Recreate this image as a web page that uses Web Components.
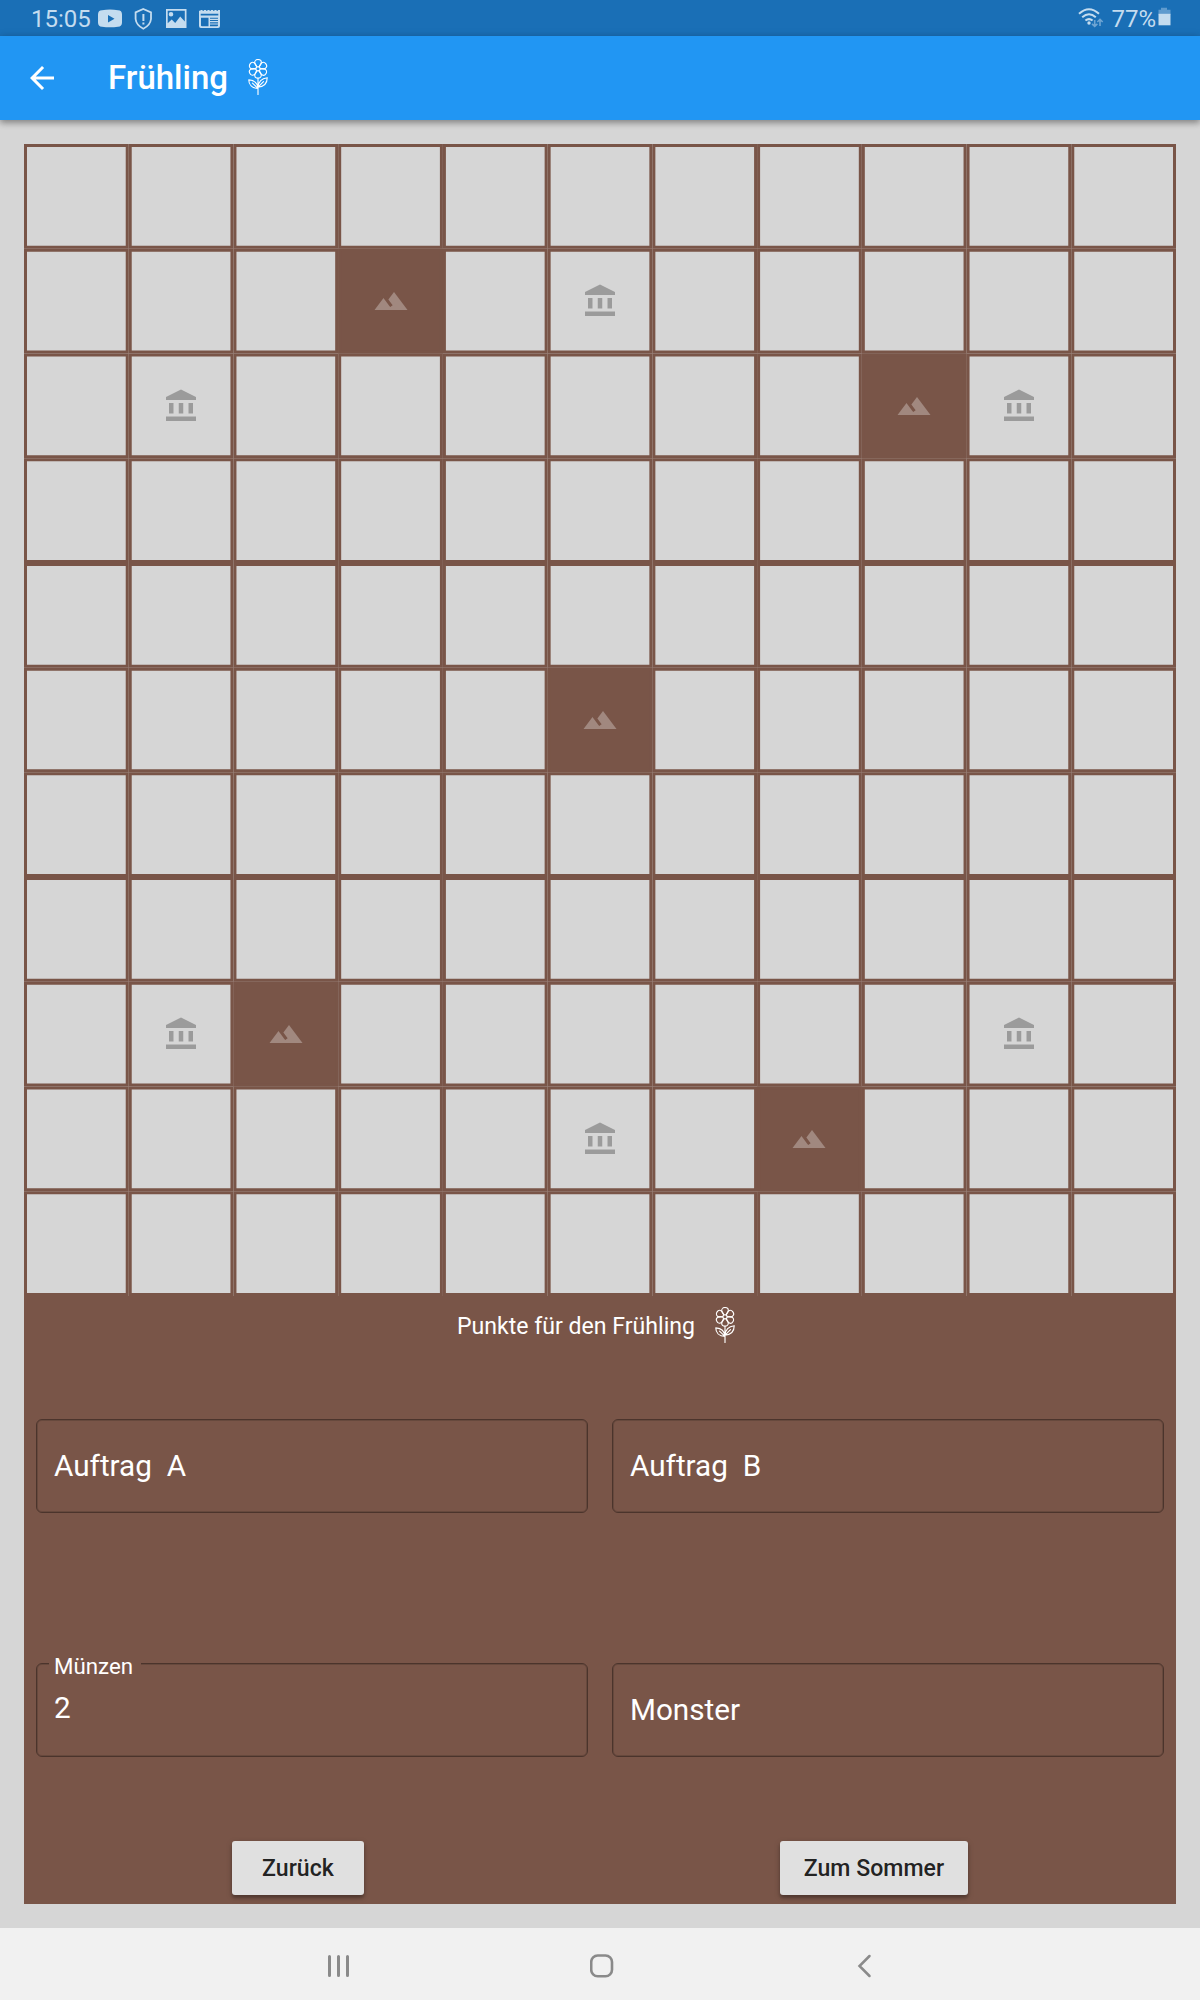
<!DOCTYPE html>
<html lang="de">
<head>
<meta charset="utf-8">
<title>Frühling</title>
<style>
html,body{margin:0;padding:0}
body{width:1200px;height:2000px;overflow:hidden;font-family:Roboto,"Noto Sans",sans-serif;background:#d6d6d6}
</style>
</head>
<body>
<season-page></season-page>
<script>
const define = (name, html, after) => {
  const tpl = document.createElement('template');
  tpl.innerHTML = html.trim();
  customElements.define(name, class extends HTMLElement {
    constructor() {
      super();
      this.attachShadow({ mode: 'open' }).appendChild(tpl.content.cloneNode(true));
    }
    connectedCallback() { if (after) after(this, this.shadowRoot); }
  });
};

const petals = [0, 60, 120, 180, 240, 300].map(a =>
  `<path transform="rotate(${a} 18 9.8)" d="M16.700 7.700C15.300 5.700 14.700 4.400 14.700 3.400A3.300 2.900 0 0 1 21.300 3.400C21.300 4.400 20.700 5.700 19.300 7.700"/>`).join('');

define('flower-icon', `
<style>:host{display:block;width:36px;height:36px}svg{display:block}</style>
<svg width="36" height="36" viewBox="0 0 36 36" fill="none" stroke="currentColor" stroke-width="1.15" stroke-linecap="round" stroke-linejoin="round">
  <circle cx="18" cy="9.8" r="2.1"/>${petals}
  <path d="M18 19.2V35.600M18 29.400C17.600 25 14.500 21.300 8.800 20.900 8.800 25.500 12 29.200 18 29.400M12.500 24.200 18 29.400M18 28.200C18.400 23.400 21.500 19.300 27.200 18.700 27.200 23.800 24 27.600 18 28.200M23.500 22.600 18 28.200"/>
</svg>`);

define('status-bar', `
<style>
:host{display:flex;align-items:center;height:36px;background:#1a6fb6;color:#c4dcef;font-size:24px;line-height:36px;box-sizing:border-box;padding:2px 29px 0 31px}
svg{display:block}
.left,.right{display:flex;align-items:center}
.right{margin-left:auto}
.time{width:67px}
</style>
<div class="left">
  <span class="time">15:05</span>
  <svg width="125" height="24" viewBox="0 0 125 24" fill="currentColor">
    <path fill-rule="evenodd" d="M4 3.200Q12 1.800 20 3.200 24 3.200 24 7.500v8q0 4-4 4.300Q12 20.800 4 19.800 0 19.500 0 15.500V7.500Q0 3.200 4 3.200zM10 8v7.500l6.500-3.700z"/>
    <path d="M45.300 2 53 5.300V12Q52.300 18.300 45.300 21.700 38.300 18.300 37.600 12V5.300z" fill="none" stroke="currentColor" stroke-width="1.800"/>
    <path d="M44.400 7h2v7h-2zM44.400 15.500h2v2h-2z"/>
    <path fill-rule="evenodd" d="M68 2h20.500v19H68zM69.700 3.700v12.500l4-3.700 3.500 3.500 5-6.500 4.600 5V3.700zM73 5a2.300 2.300 0 1 1 0 4.600a2.300 2.300 0 1 1 0-4.600z"/>
    <path fill-rule="evenodd" d="M101 3h21v16q0 2-2 2h-17q-2 0-2-2zM102.700 6.800v1.700h17.600V6.800zM103 10.700v7.800q0 .8 1 .8h6.500v-8.600zM112 10.700v8.600h7q1 0 1-.8v-7.800z"/>
    <path d="M112 11.800h8v1.100h-8zM112 14.100h8v1.100h-8zM112 16.400h8v1.100h-8z"/>
    <path d="M101 3h21" fill="none" stroke="#1a6fb6" stroke-width="1.300" stroke-dasharray="1.500 2"/>
  </svg>
</div>
<div class="right">
  <svg width="33" height="24" viewBox="0 0 33 24" fill="none" stroke="currentColor" stroke-width="2">
    <path d="M1 6.800Q11-2.300 21 6.800M4.200 10.300Q11 4.200 17.800 10.300M7.400 13.600Q11 10.600 14.600 13.600"/>
    <circle cx="11" cy="16" r="1.700" fill="currentColor" stroke="none"/>
    <path d="M16.700 13v6M14 16.800l2.700 2.500 2.700-2.500M22 19v-6.500M19.300 15l2.700-2.700L24.700 15" stroke-width="1.600" opacity=".5"/>
  </svg>
  <span class="pct">77%</span>
  <svg width="16" height="24" viewBox="0 0 16 24" style="margin-right:-1px"><path d="M5 .8h6v2h3.500v5h-12v-5H5z" fill="#5f9bce"/><path d="M2.500 6.800h12v11.500h-12z" fill="currentColor" /></svg>
</div>`);

define('app-bar', `
<style>
:host{display:flex;align-items:center;height:84px;background:#2196f3;color:#fff;box-shadow:0 3px 6px rgba(0,0,0,.3),0 1px 9px rgba(0,0,0,.14);position:relative}
svg{display:block;margin-left:24px}
h1{margin:0 0 2px 48px;font-size:33px;font-weight:500;line-height:39px}
flower-icon{margin:0 0 2px 12px}
</style>
<svg width="36" height="36" viewBox="0 0 24 24"><path fill="currentColor" d="M20 11H7.830l5.590-5.590L12 4l-8 8 8 8 1.410-1.410L7.830 13H20v-2z"/></svg>
<h1><slot></slot></h1>
<flower-icon></flower-icon>`);

define('map-icon', `
<style>:host{display:block;width:36px;height:36px}svg{display:block;width:36px;height:36px}</style>
<svg viewBox="0 0 24 24"><path/></svg>`, (el, root) => {
  const temple = el.getAttribute('kind') === 'temple';
  const p = root.querySelector('path');
  p.setAttribute('d', temple
    ? 'M4 10h3v7H4zM10.500 10h3v7h-3zM2 19h20v3H2zM17 10h3v7h-3zM12 1L2 6v2h20V6z'
    : 'M14 6l-3.750 5 2.850 3.800-1.600 1.200C9.810 13.750 7 10 7 10l-6 8h22L14 6z');
  p.setAttribute('fill', temple ? '#9b9b9b' : '#a1887f');
});

define('map-board', `
<style>
:host{display:grid;grid-template:repeat(11,minmax(0,1fr))/repeat(11,minmax(0,1fr));width:1152px;height:1152px}
svg.lines{grid-area:1/1/-1/-1;display:block}
map-icon{place-self:center}
</style>
<svg class="lines" width="1152" height="1152" viewBox="0 0 1152 1152" fill="#795548"></svg>`, (el, root) => {
  const mountains = ['1,3', '2,8', '5,5', '8,2', '9,7'];
  const temples = ['1,5', '2,1', '2,9', '8,1', '8,9', '9,5'];
  const s = 1152 / 11;
  let paths = '';
  for (let r = 0; r < 11; r++) for (let c = 0; c < 11; c++) {
    const key = r + ',' + c, x = c * s, y = r * s;
    const isM = mountains.includes(key), isT = temples.includes(key);
    const ring = `<path d="M${x} ${y}h${s}v${s}h${-s}zM${x + 3} ${y + 3}v${s - 6}h${s - 6}v${6 - s}z"/>`;
    // Mountain cells have a solid fill below their border ring.
    if (isM) paths += `<path d="M${x} ${y}h${s}v${s}h${-s}z"/>`;
    paths += ring;
    if (isM || isT) {
      const icon = document.createElement('map-icon');
      icon.setAttribute('kind', isT ? 'temple' : 'mountain');
      icon.style.gridArea = `${r + 1}/${c + 1}`;
      root.appendChild(icon);
    }
  }
  const svg = root.querySelector('svg');
  svg.setAttribute('fill-rule', 'evenodd');
  svg.innerHTML = paths;
});

define('score-field', `
<style>
:host{display:block;flex:1;position:relative;box-sizing:border-box;height:94px;border:1px solid #4b342c;border-radius:6px;box-shadow:inset 0 0 0 1px rgba(0,0,0,.14);color:#fff;font-size:29.700px;line-height:35px;padding:28px 17px}
.text{display:block;white-space:pre}
.float{position:absolute;left:12px;top:-11px;padding:0 8px 0 5px;background:#795548;font-size:22.300px;line-height:26px}
:host([value]){padding-top:26px}
</style>
<span class="text"></span>`, (el, root) => {
  const label = el.getAttribute('label'), value = el.getAttribute('value');
  root.querySelector('.text').textContent = value || label;
  if (value) {
    const f = document.createElement('label');
    f.className = 'float';
    f.textContent = label;
    root.appendChild(f);
  }
});

define('raised-button', `
<style>
:host{display:block}
button{display:block;box-sizing:border-box;height:54px;min-width:132px;padding:1px 24px 0;border:0;border-radius:3px;background:#e0e0e0;color:rgba(0,0,0,.87);font:500 23.100px/53px Roboto,sans-serif;box-shadow:0 3px 3px rgba(0,0,0,.22),0 2px 6px rgba(0,0,0,.2)}
</style>
<button><slot></slot></button>`);

define('score-panel', `
<style>
:host{display:flex;flex-direction:column;height:608px;box-sizing:border-box;background:#795548;color:#fff;padding:9px 0 9px}
.title{display:flex;align-items:center;justify-content:center;gap:12px;height:40px;font-size:23.100px}
.title span{padding-top:2px}
.row{display:flex;gap:24px;padding:0 12px}
.first{margin-top:74px}
.second{margin-top:150px}
.actions{display:flex;justify-content:space-around;margin-top:auto}
</style>
<div class="title"><span>Punkte für den Frühling</span><flower-icon></flower-icon></div>
<div class="row first"><score-field label="Auftrag  A"></score-field><score-field label="Auftrag  B"></score-field></div>
<div class="row second"><score-field label="Münzen" value="2"></score-field><score-field label="Monster"></score-field></div>
<div class="actions"><raised-button>Zurück</raised-button><raised-button>Zum Sommer</raised-button></div>`);

define('system-nav', `
<style>
:host{display:flex;align-items:center;justify-content:space-between;height:72px;background:#f1f1f1;box-sizing:border-box;padding:3px 327px 0 326px}
svg{display:block}
</style>
<svg width="25" height="26" viewBox="0 0 25 26"><path d="M3.500 3.500v19M12.500 3.500v19M21.500 3.500v19" stroke="#8a8a8a" stroke-width="3" stroke-linecap="round"/></svg>
<svg width="26" height="26" viewBox="1.500 0 26 26"><rect x="2.700" y="2.500" width="20.800" height="20.800" rx="6.500" fill="none" stroke="#8a8a8a" stroke-width="2.600"/></svg>
<svg width="18" height="26" viewBox="0 0 18 26"><path d="M14.500 3 4.500 13l10 10" fill="none" stroke="#8a8a8a" stroke-width="2.500" stroke-linecap="round"/></svg>`);

define('season-page', `
<style>
:host{display:flex;flex-direction:column;height:2000px;background:#d6d6d6}
main{flex:1;padding:24px}
</style>
<status-bar></status-bar>
<app-bar>Frühling</app-bar>
<main><map-board></map-board><score-panel></score-panel></main>
<system-nav></system-nav>`);
</script>
</body>
</html>
